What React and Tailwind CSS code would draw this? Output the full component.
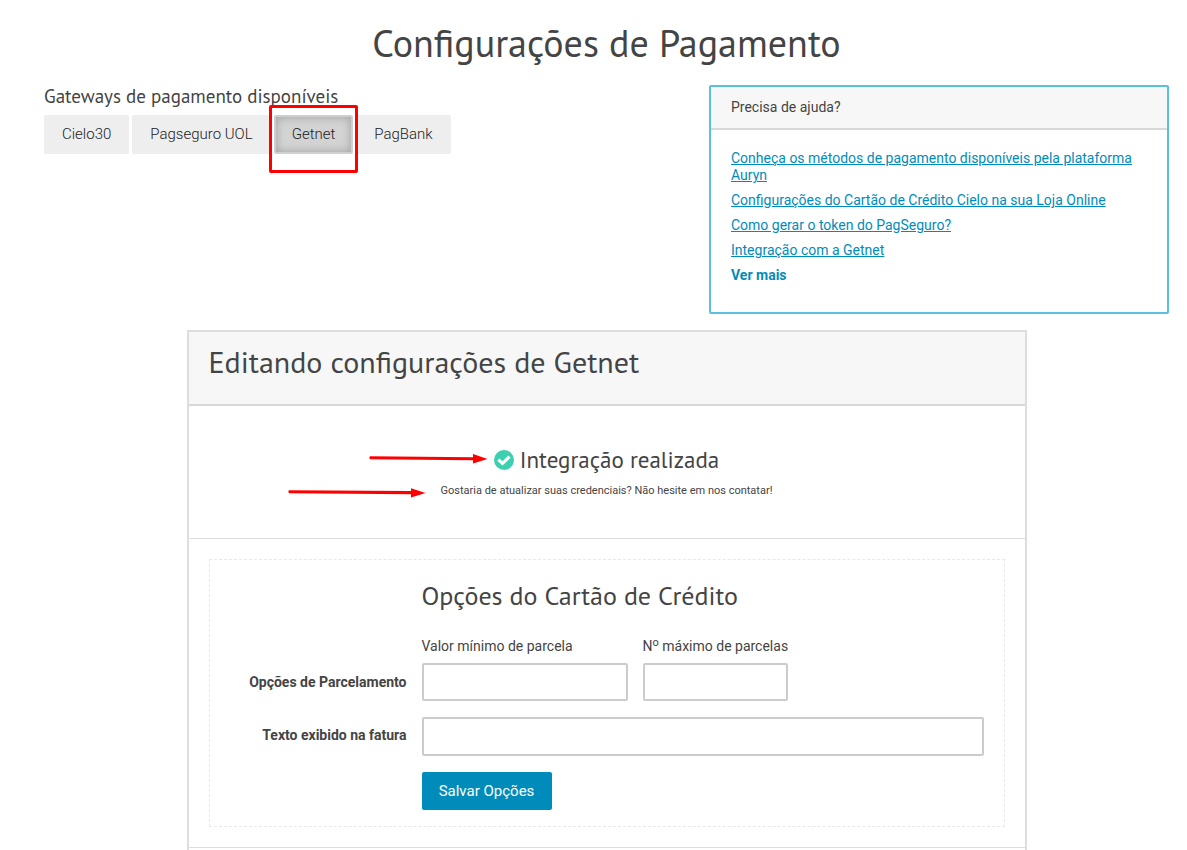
const gateways = ["Cielo30", "Pagseguro UOL", "Getnet", "PagBank"];

const helpLinks = [
  "Conheça os métodos de pagamento disponíveis pela plataforma Auryn",
  "Configurações do Cartão de Crédito Cielo na sua Loja Online",
  "Como gerar o token do PagSeguro?",
  "Integração com a Getnet",
];

const headingFont = "font-['PT_Sans','Noto_Sans',sans-serif] font-normal";
const inputClasses =
  "w-full rounded-xs border-2 border-[#cccccc] bg-white px-3 text-sm outline-none focus:border-[#008cba]";

function GatewayTabs({ active }) {
  return (
    <div className="flex gap-[3px]">
      {gateways.map((gateway) => (
        <div key={gateway} className="relative">
          <button
            type="button"
            className={`h-[39px] rounded-xs text-[15px] font-light text-[#222222] ${
              gateway === active
                ? "border-2 border-[#cfcfcf] bg-[#d3d3d3] px-4 shadow-[inset_0_0_10px_#a0a0a0]"
                : "bg-[#eeeeee] px-[18px]"
            }`}
          >
            {gateway}
          </button>
          {gateway === active && (
            <span className="pointer-events-none absolute -top-[10px] -right-[5px] -bottom-[19px] -left-[5px] z-10 rounded-xs border-3 border-[#ff0000]" />
          )}
        </div>
      ))}
    </div>
  );
}

function HelpPanel() {
  return (
    <aside className="w-[460px] shrink-0 rounded-xs border-2 border-[#5bc0de] pb-7 text-sm leading-[17px]">
      <h2 className="border-b-2 border-[#d8d8d8] bg-[#f7f7f7] px-5 py-3">
        Precisa de ajuda?
      </h2>
      <ul className="space-y-2 px-5 pt-5 text-[#008cba]">
        {helpLinks.map((link) => (
          <li key={link}>
            <a href="#" className="underline">
              {link}
            </a>
          </li>
        ))}
        <li>
          <a href="#" className="font-bold">
            Ver mais
          </a>
        </li>
      </ul>
    </aside>
  );
}

function IntegrationStatus() {
  return (
    <section className="flex flex-col items-center border-b border-[#dddddd] pt-[39px] pb-[39px]">
      <div className="relative flex items-center gap-[6px]">
        <svg
          className="absolute right-full mr-[6px]"
          width="120"
          height="12"
          viewBox="0 0 120 12"
          fill="#ff0000"
        >
          <path d="M2 2.300 105 3.200V0L119.500 5 105 9.500V6.300L2 5.300Q.5 3.800 2 2.300Z" />
        </svg>
        <svg width="20" height="20" viewBox="0 0 20 20" fill="none">
          <circle cx="10" cy="10" r="10" fill="#3dcfb0" />
          <path d="M4.400 9.600 8.500 13.400 15.600 6.600" stroke="#fff" strokeWidth="3.200" />
        </svg>
        <h3 className={`${headingFont} text-[23px] leading-[30px]`}>
          Integração realizada
        </h3>
      </div>
      <p className="relative mt-2 text-[11px] leading-4">
        <svg
          className="absolute top-[5px] right-full mr-[15px]"
          width="139"
          height="10"
          viewBox="0 0 139 10"
          fill="#ff0000"
        >
          <path d="M2 2.300 124 3V.3L138.500 5 124 9.500V6.300L2 5.300Q.5 3.800 2 2.300Z" />
        </svg>
        Gostaria de atualizar suas credenciais? Não hesite em nos contatar!
      </p>
    </section>
  );
}

function CardOptionsForm() {
  return (
    <section className="border-b border-[#dddddd] p-5">
      <form className="grid grid-cols-[177px_1fr] gap-x-[15px] border border-dashed border-[#e9e9e9] px-5 pt-5 pb-4">
        <h3 className={`${headingFont} col-start-2 text-[26px] leading-8`}>
          Opções do Cartão de Crédito
        </h3>

        <label
          htmlFor="min-value"
          className="self-end pb-[10px] text-right text-sm leading-[17px] font-bold"
        >
          Opções de Parcelamento
        </label>
        <div className="mt-6 flex gap-[15px] text-sm">
          <div className="w-[206px]">
            <label htmlFor="min-value" className="mb-[7px] block leading-5">
              Valor mínimo de parcela
            </label>
            <input id="min-value" type="text" className={`${inputClasses} block h-[38px]`} />
          </div>
          <div className="w-[145px]">
            <label
              htmlFor="max-installments"
              className="mb-[7px] block leading-5 whitespace-nowrap"
            >
              N<sup className="text-[11px]">o</sup> máximo de parcelas
            </label>
            <input
              id="max-installments"
              type="text"
              className={`${inputClasses} block h-[38px]`}
            />
          </div>
        </div>

        <label
          htmlFor="invoice-text"
          className="mt-4 pt-[10px] text-right text-sm leading-[17px] font-bold"
        >
          Texto exibido na fatura
        </label>
        <input id="invoice-text" type="text" className={`${inputClasses} mt-4 h-[39px]`} />

        <button
          type="submit"
          className="col-start-2 mt-4 h-[38px] w-[130px] rounded-xs bg-[#008cba] text-[15px] text-white"
        >
          Salvar Opções
        </button>
      </form>
    </section>
  );
}

function App() {
  return (
    <main className="flex min-h-screen flex-col bg-white pr-[18px] pl-11 font-[Roboto,sans-serif] text-[#444444]">
      <h1 className={`${headingFont} pt-[18px] text-center text-[38px] leading-[50px]`}>
        Configurações de Pagamento
      </h1>

      <div className="mt-[17px] flex items-start justify-between">
        <div>
          <h2 className={`${headingFont} pb-2 text-[19px] leading-[22px]`}>
            Gateways de pagamento disponíveis
          </h2>
          <GatewayTabs active="Getnet" />
        </div>
        <HelpPanel />
      </div>

      <div className="mx-auto mt-4 w-full max-w-[840px] grow border-2 border-b-0 border-[#dddddd]">
        <h2
          className={`${headingFont} border-b-2 border-[#d8d8d8] bg-[#f7f7f7] px-5 pt-3 pb-6 text-[30px] leading-9`}
        >
          Editando configurações de Getnet
        </h2>
        <IntegrationStatus />
        <CardOptionsForm />
      </div>
    </main>
  );
}

export default App;
